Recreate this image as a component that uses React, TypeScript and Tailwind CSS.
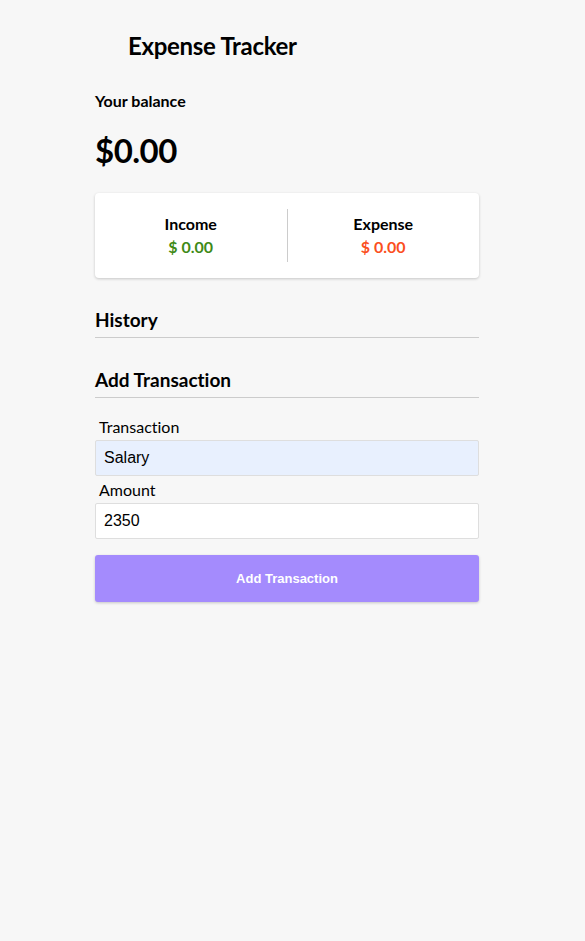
import { useState } from "react";

const LATO = { fontFamily: "Lato, 'Noto Sans', sans-serif" };
const ARIAL = { fontFamily: "'Liberation Sans', Arial, sans-serif" };

export default function App() {
  const [text, setText] = useState("Salary");
  const [amount, setAmount] = useState("2350");

  return (
    <div
      className="min-h-[941px] w-full bg-[#f7f7f7] text-black [font-variant-ligatures:none]"
      style={LATO}
    >
      <div className="ml-[95px] w-[384px] pt-[30px]">
        <h2 className="pl-[33px] text-[24px] font-bold leading-[32px] tracking-[-0.3px]">
          Expense Tracker
        </h2>

        <h4 className="mt-[29px] text-[16px] font-bold leading-[20px]">Your balance</h4>
        <h1 className="mt-[19px] text-[33px] font-bold leading-[40px] tracking-[-0.5px]">$0.00</h1>

        <div className="mt-[23px] flex rounded-[4px] bg-white py-[16px] shadow-[0_1px_3px_rgba(0,0,0,0.2)]">
          <div className="flex flex-1 flex-col items-center border-r border-[#cccccc] pt-[4px] pb-[4px]">
            <h4 className="text-[16px] font-bold leading-[22px]">Income</h4>
            <p className="mt-[1px] text-[16px] font-bold leading-[22px] text-[#3f8a17]">$ 0.00</p>
          </div>
          <div className="flex flex-1 flex-col items-center pt-[4px] pb-[4px]">
            <h4 className="text-[16px] font-bold leading-[22px]">Expense</h4>
            <p className="mt-[1px] text-[16px] font-bold leading-[22px] text-[#fb4f1e]">$ 0.00</p>
          </div>
        </div>

        <h3 className="mt-[30px] border-b border-[#cccccc] pb-[5px] text-[19px] font-bold leading-[24px]">
          History
        </h3>

        <h3 className="mt-[30px] border-b border-[#cccccc] pb-[5px] text-[19px] font-bold leading-[24px]">
          Add Transaction
        </h3>

        <form className="mt-[19px]" onSubmit={(e) => e.preventDefault()}>
          <label className="block pl-[4px] text-[16px] leading-[20px]">Transaction</label>
          <input
            value={text}
            onChange={(e) => setText(e.target.value)}
            className="mt-[3px] block h-[36px] w-full rounded-[2px] border border-[#dedede] bg-[#e8f0fe] px-[8px] text-[16px] outline-none"
            style={ARIAL}
          />
          <label className="mt-[4px] block pl-[4px] text-[16px] leading-[20px]">Amount</label>
          <input
            value={amount}
            onChange={(e) => setAmount(e.target.value)}
            className="mt-[3px] block h-[36px] w-full rounded-[2px] border border-[#dedede] bg-white px-[8px] text-[16px] outline-none"
            style={ARIAL}
          />
          <button
            type="submit"
            className="mt-[16px] block h-[47px] w-full rounded-[3px] bg-[#a48bfd] text-[13px] font-bold text-white shadow-[0_1px_3px_rgba(0,0,0,0.2)]"
            style={ARIAL}
          >
            Add Transaction
          </button>
        </form>
      </div>
    </div>
  );
}
